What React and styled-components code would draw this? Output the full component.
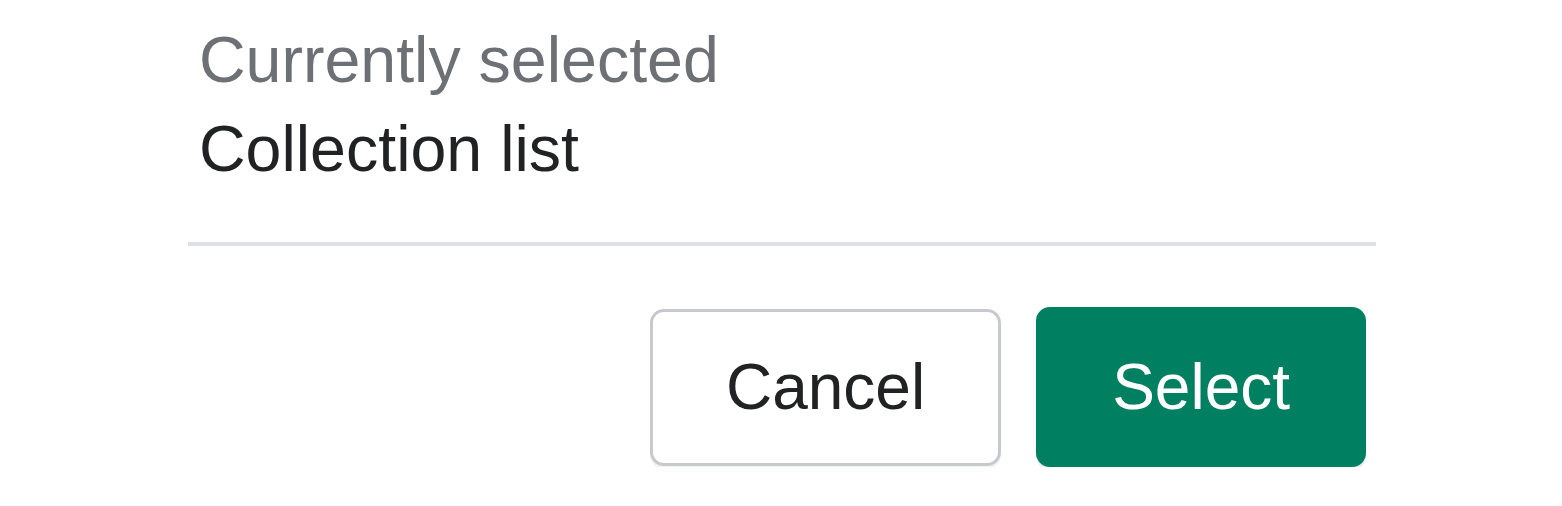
import React from "react";
import styled, { createGlobalStyle } from "styled-components";

const Global = createGlobalStyle`
  html, body {
    margin: 0;
    padding: 0;
    background: #ffffff;
  }
  body {
    font-family: "Liberation Sans", Arial, sans-serif;
  }
`;

const Page = styled.div`
  width: 1188px;
  padding: 16px 0 0 188px;
`;

const Info = styled.div`
  padding-left: 11px;
  font-size: 64.5px;
  line-height: 89px;
`;

const Label = styled.div`
  color: ${(p) => (p.$muted ? "#6d7175" : "#202223")};
`;

const Divider = styled.hr`
  margin: 48px 0 0;
  border: 0;
  height: 4px;
  background: #dfe1e7;
`;

const Actions = styled.div`
  display: flex;
  justify-content: flex-end;
  align-items: center;
  gap: 35px;
  padding: 61px 10px 0 0;
`;

const Button = styled.button`
  box-sizing: border-box;
  display: flex;
  align-items: center;
  justify-content: center;
  height: ${(p) => (p.$primary ? "160px" : "157px")};
  padding: 0 73px;
  border-radius: 14px;
  font-family: "Liberation Sans", Arial, sans-serif;
  font-size: 64px;
  font-weight: 400;
  cursor: pointer;
  border: 3px solid ${(p) => (p.$primary ? "#008060" : "#c6c9cd")};
  background: ${(p) => (p.$primary ? "#008060" : "#ffffff")};
  color: ${(p) => (p.$primary ? "#ffffff" : "#202223")};
  box-shadow: ${(p) =>
    p.$primary
      ? "0 3px 0 rgba(0, 0, 0, 0.08)"
      : "0 3px 0 rgba(0, 0, 0, 0.05)"};
`;

export default function App() {
  return (
    <>
      <Global />
      <Page>
        <Info>
          <Label $muted>Currently selected</Label>
          <Label>Collection list</Label>
        </Info>
        <Divider />
        <Actions>
          <Button>Cancel</Button>
          <Button $primary>Select</Button>
        </Actions>
      </Page>
    </>
  );
}
